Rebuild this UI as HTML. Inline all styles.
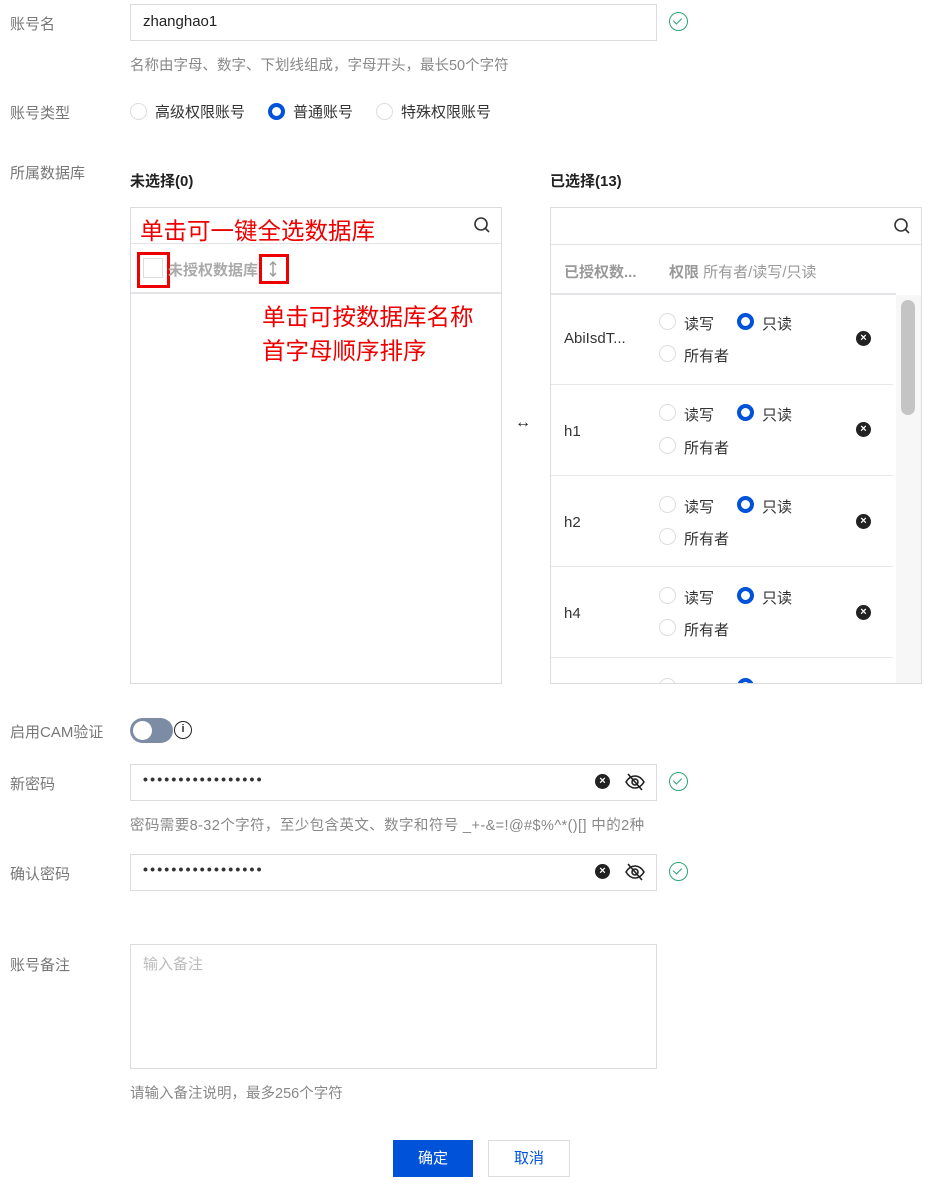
<!DOCTYPE html>
<html><head><meta charset="utf-8"><style>
*{box-sizing:border-box;margin:0;padding:0}
body{width:948px;height:1184px;background:#fff;position:relative;font-family:"Liberation Sans","Noto Sans CJK SC",sans-serif;font-size:15px;color:#333;overflow:hidden}
.a{position:absolute}
.lbl{position:absolute;left:10px;color:#777;font-size:15px}
.inp{position:absolute;border:1px solid #dcdcdc;background:#fff}
.help{position:absolute;left:130px;color:#888;font-size:14.5px}
.radio{position:absolute;width:17px;height:17px;border-radius:50%;border:1px solid #ddd;background:#fff}
.radio.on{border:4px solid #0052d9}
.chk{position:absolute;width:19px;height:19px;border-radius:50%;border:1.5px solid #2ba471}
.chk:after{content:"";position:absolute;left:5px;top:3px;width:4px;height:7px;border:solid #2ba471;border-width:0 1.5px 1.5px 0;transform:rotate(45deg)}
.x{position:absolute;width:15px;height:15px;border-radius:50%;background:#222;color:#fff;font-size:11px;line-height:15px;text-align:center;font-weight:bold}
.red{color:#e00;font-size:23.5px;position:absolute}
.rbox{position:absolute;border:3px solid #e00}
.row{position:absolute;left:551px;width:342px;height:91px;border-bottom:1px solid #e7e7e7}
.dots{position:absolute;left:143px;font-size:14px;letter-spacing:2.2px;font-weight:bold}
</style></head><body>
<div class="lbl" style="top:13px">账号名</div>
<div class="inp" style="left:130px;top:4px;width:527px;height:37px"></div>
<div class="a" style="left:143px;top:13px;color:#222">zhanghao1</div>
<div class="chk" style="left:669px;top:12px"></div>
<div class="help" style="top:54px">名称由字母、数字、下划线组成，字母开头，最长50个字符</div>

<div class="lbl" style="top:102px">账号类型</div>
<div class="radio" style="left:130px;top:103px"></div><div class="a" style="left:155px;top:101px">高级权限账号</div>
<div class="radio on" style="left:268px;top:103px"></div><div class="a" style="left:293px;top:101px">普通账号</div>
<div class="radio" style="left:376px;top:103px"></div><div class="a" style="left:401px;top:101px">特殊权限账号</div>

<div class="lbl" style="top:162px">所属数据库</div>
<div class="a" style="left:130px;top:170px;font-weight:bold;color:#222">未选择(0)</div>
<div class="a" style="left:550px;top:170px;font-weight:bold;color:#222">已选择(13)</div>

<div class="inp" style="left:130px;top:207px;width:372px;height:477px"></div>
<div class="a" style="left:131px;top:243px;width:370px;border-top:1px solid #e3e3e8"></div>
<div class="a" style="left:131px;top:292px;width:370px;border-top:2px solid #e3e3e8"></div>
<svg class="a" style="left:473px;top:216px" width="18" height="18" viewBox="0 0 18 18"><circle cx="8" cy="8" r="6" fill="none" stroke="#333" stroke-width="1.6"/><path d="M12.5 12.5L16 16" stroke="#333" stroke-width="1.6"/></svg>
<div class="red" style="left:140px;top:212px">单击可一键全选数据库</div>
<div class="a" style="left:143px;top:258px;width:20px;height:20px;border:1px solid #ddd"></div>
<div class="rbox" style="left:137px;top:252px;width:33px;height:36px"></div>
<div class="a" style="left:168px;top:259px;color:#aaa;font-size:15px;font-weight:bold">未授权数据库</div>
<svg class="a" style="left:268px;top:261px" width="10" height="16" viewBox="0 0 10 16"><path d="M5 1V15M2 4L5 1L8 4M2 12L5 15L8 12" fill="none" stroke="#999" stroke-width="1.4"/></svg>
<div class="rbox" style="left:259px;top:254px;width:30px;height:30px"></div>
<div class="red" style="left:262px;top:300px;line-height:34px">单击可按数据库名称<br>首字母顺序排序</div>

<div class="a" style="left:515px;top:414px;font-size:16px;color:#222">↔</div>

<div class="inp" style="left:550px;top:207px;width:372px;height:477px;overflow:hidden">
<svg class="a" style="left:342px;top:9px" width="18" height="18" viewBox="0 0 18 18"><circle cx="8" cy="8" r="6" fill="none" stroke="#333" stroke-width="1.6"/><path d="M12.5 12.5L16 16" stroke="#333" stroke-width="1.6"/></svg>
<div class="a" style="left:0;top:36px;width:372px;border-top:1px solid #e3e3e8"></div>
<div class="a" style="left:13px;top:53px;color:#999;font-weight:bold">已授权数...</div>
<div class="a" style="left:118px;top:53px;color:#999"><b>权限</b> 所有者/读写/只读</div>
<div class="a" style="left:0;top:85px;width:345px;border-top:2px solid #e3e3e8"></div>
<div class="a" style="left:345px;top:87px;width:25px;height:390px;background:#f7f7f7"></div>
<div class="a" style="left:350px;top:92px;width:14px;height:115px;border-radius:7px;background:#c4c4c4"></div>
</div>

<div class="row" style="top:294px"></div>
<div class="row" style="top:385px"></div>
<div class="row" style="top:476px"></div>
<div class="row" style="top:567px"></div>
<div class="a" style="left:564px;top:330px">AbiIsdT...</div>
<div class="a" style="left:564px;top:423px">h1</div>
<div class="a" style="left:564px;top:514px">h2</div>
<div class="a" style="left:564px;top:605px">h4</div>

<div class="radio" style="left:659px;top:313px"></div><div class="a" style="left:684px;top:313px">读写</div>
<div class="radio on" style="left:737px;top:313px"></div><div class="a" style="left:762px;top:313px">只读</div>
<div class="radio" style="left:659px;top:345px"></div><div class="a" style="left:684px;top:345px">所有者</div>
<div class="x" style="left:856px;top:331px">×</div>

<div class="radio" style="left:659px;top:404px"></div><div class="a" style="left:684px;top:404px">读写</div>
<div class="radio on" style="left:737px;top:404px"></div><div class="a" style="left:762px;top:404px">只读</div>
<div class="radio" style="left:659px;top:437px"></div><div class="a" style="left:684px;top:437px">所有者</div>
<div class="x" style="left:856px;top:422px">×</div>

<div class="radio" style="left:659px;top:496px"></div><div class="a" style="left:684px;top:496px">读写</div>
<div class="radio on" style="left:737px;top:496px"></div><div class="a" style="left:762px;top:496px">只读</div>
<div class="radio" style="left:659px;top:528px"></div><div class="a" style="left:684px;top:528px">所有者</div>
<div class="x" style="left:856px;top:514px">×</div>

<div class="radio" style="left:659px;top:587px"></div><div class="a" style="left:684px;top:587px">读写</div>
<div class="radio on" style="left:737px;top:587px"></div><div class="a" style="left:762px;top:587px">只读</div>
<div class="radio" style="left:659px;top:619px"></div><div class="a" style="left:684px;top:619px">所有者</div>
<div class="x" style="left:856px;top:605px">×</div>
<div class="a" style="left:551px;top:660px;width:342px;height:23px;overflow:hidden"><div class="radio" style="left:108px;top:18px"></div><div class="radio on" style="left:186px;top:18px"></div></div>

<div class="lbl" style="top:721px">启用CAM验证</div>
<div class="a" style="left:130px;top:718px;width:43px;height:25px;border-radius:13px;background:#7d8ca5"></div>
<div class="a" style="left:133px;top:721px;width:19px;height:19px;border-radius:50%;background:#fff"></div>
<div class="a" style="left:174px;top:721px;width:18px;height:18px;border-radius:50%;border:1.5px solid #222;font-size:11px;line-height:15px;text-align:center;font-weight:bold">i</div>

<div class="lbl" style="top:773px">新密码</div>
<div class="inp" style="left:130px;top:764px;width:527px;height:37px"></div>
<div class="dots" style="top:771px">•••••••••••••••••</div>
<div class="x" style="left:595px;top:774px">×</div>
<svg class="a" style="left:624px;top:772px" width="22" height="20" viewBox="0 0 22 20"><path d="M2 10C5 5 8 4 11 4s6 1 9 6c-3 5-6 6-9 6s-6-1-9-6z" fill="none" stroke="#222" stroke-width="1.6"/><circle cx="11" cy="10" r="3" fill="none" stroke="#222" stroke-width="1.6"/><path d="M4 2L18 18" stroke="#222" stroke-width="1.6"/></svg>
<div class="chk" style="left:669px;top:772px"></div>
<div class="help" style="top:814px;letter-spacing:0.4px">密码需要8-32个字符，至少包含英文、数字和符号 _+-&amp;=!@#$%^*()[] 中的2种</div>

<div class="lbl" style="top:863px">确认密码</div>
<div class="inp" style="left:130px;top:854px;width:527px;height:37px"></div>
<div class="dots" style="top:861px">•••••••••••••••••</div>
<div class="x" style="left:595px;top:864px">×</div>
<svg class="a" style="left:624px;top:862px" width="22" height="20" viewBox="0 0 22 20"><path d="M2 10C5 5 8 4 11 4s6 1 9 6c-3 5-6 6-9 6s-6-1-9-6z" fill="none" stroke="#222" stroke-width="1.6"/><circle cx="11" cy="10" r="3" fill="none" stroke="#222" stroke-width="1.6"/><path d="M4 2L18 18" stroke="#222" stroke-width="1.6"/></svg>
<div class="chk" style="left:669px;top:862px"></div>

<div class="lbl" style="top:954px">账号备注</div>
<div class="inp" style="left:130px;top:944px;width:527px;height:125px"></div>
<div class="a" style="left:143px;top:953px;color:#bbb">输入备注</div>
<div class="help" style="top:1082px">请输入备注说明，最多256个字符</div>

<div class="a" style="left:393px;top:1140px;width:80px;height:37px;background:#0052d9;color:#fff;text-align:center;line-height:37px">确定</div>
<div class="a" style="left:488px;top:1140px;width:82px;height:37px;border:1px solid #dcdcdc;color:#0052d9;text-align:center;line-height:35px">取消</div>
</body></html>
